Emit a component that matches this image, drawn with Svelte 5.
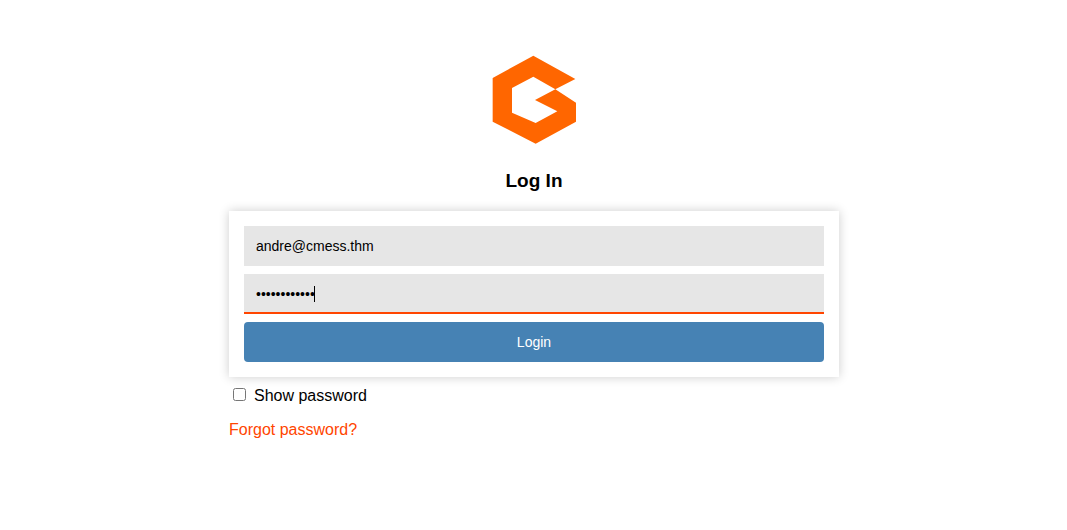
<script>
  import { onMount } from 'svelte';

  // Width of one masking bullet in the 14px field font, as a share of an em.
  const BULLET = 0.35;

  let email = $state('andre@cmess.thm');
  let password = $state('cmesssecret1');
  let visible = $state(false);
  let focused = $state(false);
  let field;

  onMount(() => {
    field.focus();
    field.setSelectionRange(password.length, password.length);
  });
</script>

<svelte:head><title>Log In</title></svelte:head>

<main>
  <svg class="logo" viewBox="33 30 258 267" aria-hidden="true">
    <path
      fill="#ff6600"
      fill-rule="evenodd"
      d="M160 32 286 102 226 133 288 173V230L167 296 38 230V99ZM160 95 96 129V203L167 234 232 199 165 165 226 133Z"
    />
  </svg>
  <h1>Log In</h1>
  <form onsubmit={(e) => e.preventDefault()}>
    <input class="field" type="email" aria-label="Email" bind:value={email} />
    <div class="secret">
      <input
        class="field"
        class:masked={!visible}
        type={visible ? 'text' : 'password'}
        aria-label="Password"
        value={password}
        oninput={(e) => (password = e.currentTarget.value)}
        onfocus={() => (focused = true)}
        onblur={() => (focused = false)}
        bind:this={field}
      />
      {#if focused && !visible}
        <span class="caret" style:left="calc(11px + {password.length * BULLET}em)"></span>
      {/if}
    </div>
    <button type="submit">Login</button>
  </form>
  <label class="show">
    <input type="checkbox" bind:checked={visible} />
    <span>Show password</span>
  </label>
  <a href="#forgot">Forgot password?</a>
</main>

<style>
  :global(body) {
    margin: 0;
    background: #fff;
    color: #000;
    font-family: 'Liberation Sans', Arial, sans-serif;
    font-size: 16px;
  }

  main {
    box-sizing: border-box;
    display: flex;
    flex-direction: column;
    max-width: 641px;
    margin: 0 auto;
    padding: 55px 15px 32px 16px;
  }

  .logo {
    align-self: center;
    width: 86px;
    height: 89px;
  }

  h1 {
    margin: 26px 0 20px;
    font-size: 19px;
    line-height: 21px;
    text-align: center;
  }

  form {
    display: flex;
    flex-direction: column;
    gap: 8px;
    padding: 15px;
    background: #fff;
    box-shadow: 0 0 10px rgba(0, 0, 0, 0.2);
  }

  .field,
  button {
    box-sizing: border-box;
    display: block;
    width: 100%;
    height: 40px;
    margin: 0;
    font-family: inherit;
    font-size: 14px;
  }

  .field {
    padding: 0 12px;
    border: 0;
    border-radius: 0;
    outline: 0;
    background: #e6e6e6;
    color: #000;
  }

  .field:focus {
    padding-top: 2px;
    border-bottom: 2px solid #ff4500;
  }

  .masked {
    caret-color: transparent;
  }

  .secret {
    position: relative;
    font-size: 14px;
  }

  .caret {
    position: absolute;
    top: 12px;
    width: 1px;
    height: 16px;
    background: #000;
    pointer-events: none;
  }

  button {
    border: 0;
    border-radius: 4px;
    background: #4682b4;
    color: #fff;
    cursor: pointer;
  }

  .show {
    display: flex;
    align-items: flex-start;
    align-self: flex-start;
    gap: 8px;
    margin-top: 10px;
    line-height: 18px;
  }

  .show input {
    width: 13px;
    height: 13px;
    margin: 1px 0 0 4px;
  }

  a {
    align-self: flex-start;
    margin-top: 16px;
    color: #ff4500;
    line-height: 18px;
    text-decoration: none;
  }
</style>
